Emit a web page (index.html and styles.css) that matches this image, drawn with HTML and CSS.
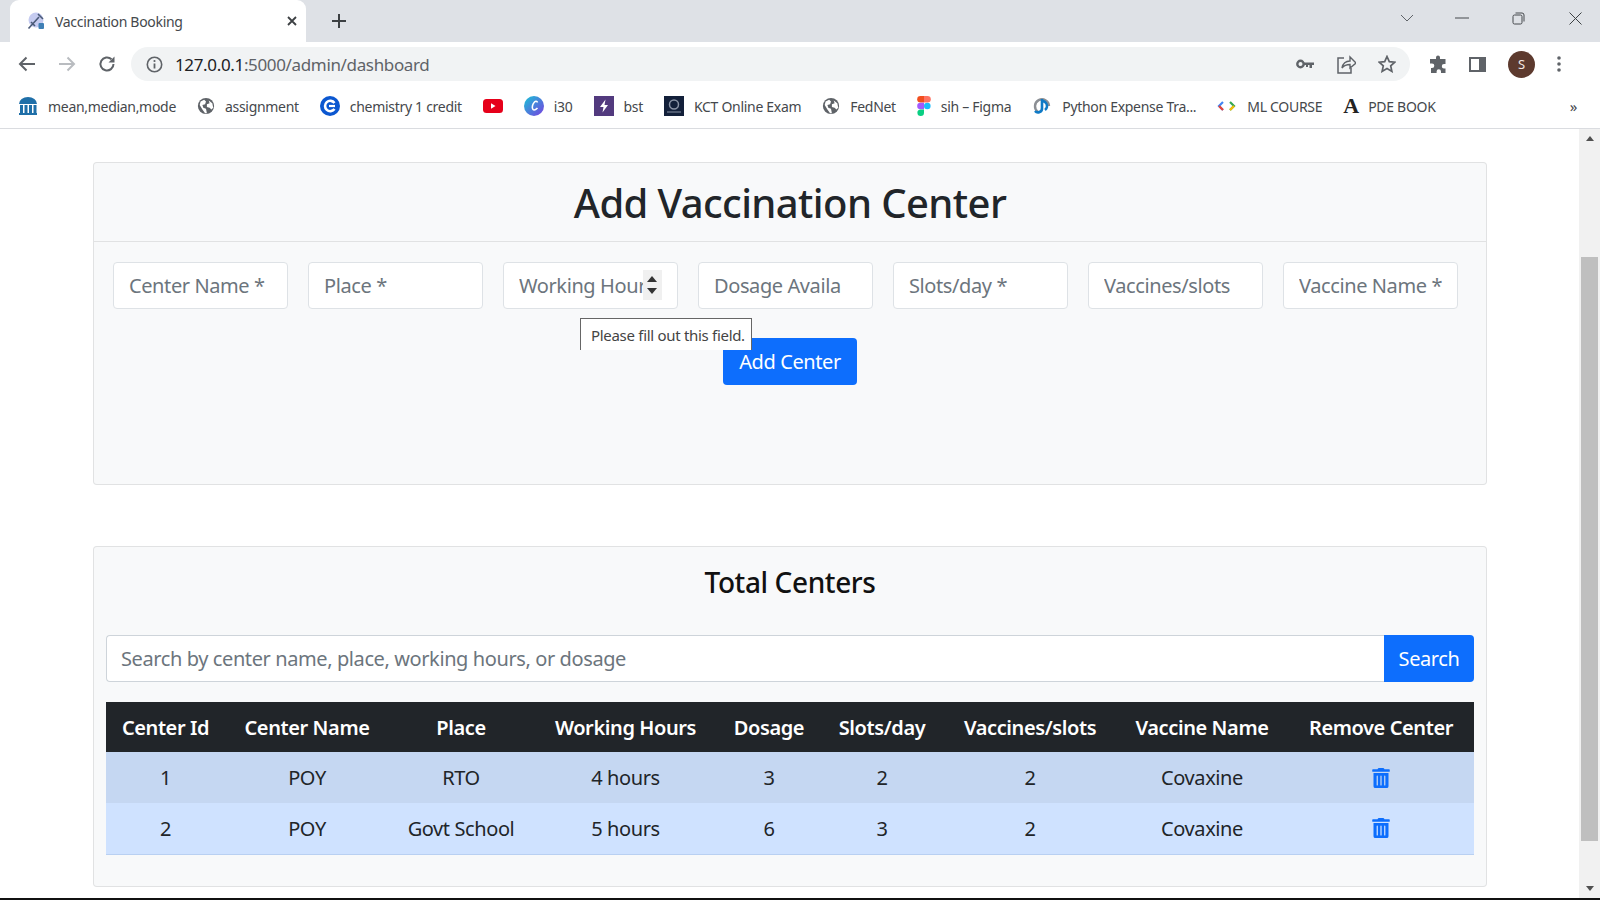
FILE: index.html
```html
<!DOCTYPE html>
<html lang="en">
<head>
  <meta charset="UTF-8" />
  <meta name="viewport" content="width=device-width, initial-scale=1.0" />
  <title>Vaccination Booking</title>
  <link rel="stylesheet" href="styles.css">
</head>
<body>
  <svg class="sprites" width="0" height="0">
    <symbol id="globe" viewBox="0 0 20 20">
      <circle cx="10" cy="10" r="9" fill="#5f6368"/>
      <path d="M4 5l4-2 2 2-1 3-3 1 1 3 3 1 1 5-2 0-3-4-3-5zM13 4l4 3 1 5-2 2-2-2-3-1 0-3 3-1z" fill="#fff"/>
    </symbol>
    <symbol id="trash" viewBox="0 0 448 512">
      <path d="M32 464a48 48 0 0 0 48 48h288a48 48 0 0 0 48-48V128H32zm272-256a16 16 0 0 1 32 0v224a16 16 0 0 1-32 0zm-96 0a16 16 0 0 1 32 0v224a16 16 0 0 1-32 0zm-96 0a16 16 0 0 1 32 0v224a16 16 0 0 1-32 0zM432 32H312l-9.4-18.7A24 24 0 0 0 281.1 0H166.8a23.72 23.72 0 0 0-21.4 13.3L136 32H16A16 16 0 0 0 0 48v32a16 16 0 0 0 16 16h416a16 16 0 0 0 16-16V48a16 16 0 0 0-16-16z" fill="currentColor"/>
    </symbol>
  </svg>

  <!-- browser chrome -->
  <header class="chrome">
    <div class="tabstrip">
      <div class="tab">
        <svg class="tab-icon" width="18" height="18" viewBox="0 0 18 18">
          <circle cx="9" cy="8" r="7.5" fill="#c5cbf0"/>
          <path d="M1.5 16.5L12 5M4 10l4 4M11 2l5 5" stroke="#4a5a78" stroke-width="1.6" fill="none"/>
          <rect x="11.5" y="11" width="5.5" height="6" rx="1" fill="#3f7fb5"/>
        </svg>
        <span class="tab-title">Vaccination Booking</span>
        <svg class="tab-close" width="10" height="10" viewBox="0 0 10 10"><path d="M1 1l8 8M9 1l-8 8" stroke="#3c4043" stroke-width="1.8"/></svg>
      </div>
      <svg class="new-tab" width="16" height="16" viewBox="0 0 16 16"><path d="M8 1v14M1 8h14" stroke="#3c4043" stroke-width="2"/></svg>
      <div class="window-btns">
        <svg class="win-chevron" width="14" height="8" viewBox="0 0 14 8"><path d="M1 1l6 6 6-6" stroke="#5f6368" stroke-width="1" fill="none"/></svg>
        <svg class="win-min" width="14" height="2" viewBox="0 0 14 2"><path d="M0 1h14" stroke="#45484c" stroke-width="1"/></svg>
        <svg class="win-max" width="13" height="13" viewBox="0 0 13 13"><rect x="1" y="3" width="9" height="9" rx="1.5" fill="none" stroke="#45484c"/><path d="M3.5 1h6.5a2 2 0 0 1 2 2v6.5" fill="none" stroke="#45484c"/></svg>
        <svg class="win-close" width="13" height="13" viewBox="0 0 13 13"><path d="M.5.5l12 12M12.5.5l-12 12" stroke="#3c4043" stroke-width="1"/></svg>
      </div>
    </div>

    <div class="toolbar">
      <svg class="nav-btn" width="18" height="16" viewBox="0 0 18 16"><path d="M17 8H2M8.5 1.5L2 8l6.5 6.5" stroke="#5f6368" stroke-width="2" fill="none"/></svg>
      <svg class="nav-btn" width="18" height="16" viewBox="0 0 18 16"><path d="M1 8h15M9.5 1.5L16 8l-6.5 6.5" stroke="#b9bcc0" stroke-width="2" fill="none"/></svg>
      <svg class="nav-btn" width="18" height="18" viewBox="0 0 18 18"><path d="M15.5 9a6.5 6.5 0 1 1-2-4.7" stroke="#5f6368" stroke-width="2" fill="none"/><path d="M16.5 1.5v6h-6z" fill="#5f6368"/></svg>
      <div class="omnibox">
        <svg width="17" height="17" viewBox="0 0 17 17"><circle cx="8.5" cy="8.5" r="7.2" fill="none" stroke="#5f6368" stroke-width="1.6"/><path d="M8.5 7.5v5" stroke="#5f6368" stroke-width="1.8"/><circle cx="8.5" cy="5" r="1.1" fill="#5f6368"/></svg>
        <span class="url"><span class="url-host">127.0.0.1</span>:5000/admin/dashboard</span>
        <span class="omni-actions">
          <svg width="18" height="10" viewBox="0 0 18 10"><circle cx="4.5" cy="5" r="3.2" fill="none" stroke="#5f6368" stroke-width="2.4"/><path d="M8 3.5h10v2.5h-2v3h-2.5V6H12v2H10V6H8z" fill="#5f6368"/></svg>
          <svg width="20" height="19" viewBox="0 0 20 19"><path d="M8 3H2v15h13v-5" fill="none" stroke="#5f6368" stroke-width="1.5"/><path d="M6 13c1-5 4-7 8-7V2l6 6-6 5V9.500c-3 0-6 1-8 3.500z" fill="none" stroke="#5f6368" stroke-width="1.4"/></svg>
          <svg width="18" height="18" viewBox="0 0 18 18"><path d="M9 1.500l2.300 5.100 5.500.6-4.100 3.700 1.200 5.500L9 13.600l-4.900 2.800 1.200-5.500L1.200 7.200l5.500-.6z" fill="none" stroke="#5f6368" stroke-width="1.7"/></svg>
        </span>
      </div>
      <div class="toolbar-end">
        <svg width="18" height="18" viewBox="0 0 18 18"><path d="M7 2.500a2 2 0 0 1 4 0V4h5.500v5h-1.500a2.200 2.200 0 0 0 0 4.400h1.500V18H12v-1.500a2.200 2.200 0 0 0-4.400 0V18H2v-5h1a2.300 2.300 0 0 0 0-4.600H1V4h6z" fill="#5f6368"/></svg>
        <svg width="17" height="15" viewBox="0 0 17 15"><rect x="1" y="1" width="15" height="13" fill="none" stroke="#5f6368" stroke-width="2"/><rect x="10" y="1" width="6" height="13" fill="#5f6368"/></svg>
        <span class="avatar">S</span>
        <svg width="4" height="16" viewBox="0 0 4 16"><circle cx="2" cy="2" r="1.800" fill="#5f6368"/><circle cx="2" cy="8" r="1.800" fill="#5f6368"/><circle cx="2" cy="14" r="1.800" fill="#5f6368"/></svg>
      </div>
    </div>

    <nav class="bookmarks">
      <a class="bookmark">
        <svg width="20" height="18" viewBox="0 0 20 18"><path d="M1 7a9 7 0 0 1 18 0z" fill="#1f6fa8"/><path d="M2 8h3v8H2zM6.500 8h3v8h-3zM11 8h3v8h-3zM15.500 8h3v8h-3zM1 16h18v2H1z" fill="#1f6fa8"/></svg>
        mean,median,mode
      </a>
      <a class="bookmark"><svg width="18" height="18"><use href="#globe"/></svg>assignment</a>
      <a class="bookmark">
        <svg width="20" height="20" viewBox="0 0 20 20"><circle cx="10" cy="10" r="10" fill="#0b57d0"/><path d="M14.500 7a5.200 5.200 0 1 0 0 6" fill="none" stroke="#fff" stroke-width="2.600"/><path d="M9 10h6" stroke="#fff" stroke-width="2.200"/></svg>
        chemistry 1 credit
      </a>
      <a class="bookmark">
        <svg width="20" height="14" viewBox="0 0 20 14"><rect width="20" height="14" rx="3.500" fill="#e6001a"/><path d="M8 4.200v5.600L12.500 7z" fill="#fff"/></svg>
      </a>
      <a class="bookmark">
        <svg width="20" height="20" viewBox="0 0 20 20"><defs><linearGradient id="canva" x1="0" y1="0" x2="1" y2="1"><stop offset="0" stop-color="#17c3d6"/><stop offset="1" stop-color="#7a3fe0"/></linearGradient></defs><circle cx="10" cy="10" r="10" fill="url(#canva)"/><path d="M13.500 6.500c-.5-1.500-2-1.500-3-.5-2 2-3 6-1.500 7.500 1 1 3 0 4.500-1.500" fill="none" stroke="#fff" stroke-width="1.600"/></svg>
        i30
      </a>
      <a class="bookmark">
        <svg width="20" height="20" viewBox="0 0 20 20"><rect width="20" height="20" fill="#523a7e"/><path d="M11.500 3.500L6 11h3.500l-1 5.500L14 9h-3.500z" fill="#fff"/></svg>
        bst
      </a>
      <a class="bookmark">
        <svg width="20" height="20" viewBox="0 0 20 20"><rect width="20" height="20" fill="#13203a"/><circle cx="10" cy="8.500" r="4.500" fill="none" stroke="#8a93a5" stroke-width="1.500"/><path d="M3 16h14" stroke="#8a93a5"/></svg>
        KCT Online Exam
      </a>
      <a class="bookmark"><svg width="18" height="18"><use href="#globe"/></svg>FedNet</a>
      <a class="bookmark">
        <svg width="14" height="20" viewBox="0 0 14 20"><path d="M7 0H3.500a3.300 3.300 0 0 0 0 6.600H7z" fill="#f24e1e"/><path d="M7 0h3.500a3.300 3.300 0 0 1 0 6.600H7z" fill="#ff7262"/><path d="M7 6.700H3.500a3.300 3.300 0 0 0 0 6.600H7z" fill="#a259ff"/><circle cx="10.300" cy="10" r="3.300" fill="#1abcfe"/><path d="M7 13.400H3.500A3.300 3.300 0 1 0 7 16.700z" fill="#0acf83"/></svg>
        sih – Figma
      </a>
      <a class="bookmark">
        <svg width="20" height="20" viewBox="0 0 20 20"><path d="M6 16a7 7 0 1 1 11-6" fill="none" stroke="#8b8f94" stroke-width="2.400"/><path d="M10 3v9a4 4 0 0 1-7 3" fill="none" stroke="#0f7ac6" stroke-width="2.600"/><path d="M10 5a5 5 0 0 1 3 9" fill="none" stroke="#0f7ac6" stroke-width="2.400"/></svg>
        Python Expense Tra...
      </a>
      <a class="bookmark">
        <svg width="20" height="10" viewBox="0 0 20 10"><path d="M6 1L2 5l4 4" fill="none" stroke="#4285f4" stroke-width="2.200"/><path d="M6 9L2 5" fill="none" stroke="#ea4335" stroke-width="2.200"/><path d="M13 1l4 4-4 4" fill="none" stroke="#34a853" stroke-width="2.200"/><path d="M13 9l4-4" fill="none" stroke="#fbbc04" stroke-width="2.200"/></svg>
        ML COURSE
      </a>
      <a class="bookmark"><span class="pde-icon">A</span>PDE BOOK</a>
      <span class="more">»</span>
    </nav>
  </header>

  <!-- page viewport -->
  <div class="viewport">
    <main class="page">
      <section class="card add-card">
        <h1 class="card-header">Add Vaccination Center</h1>
        <form class="card-body">
          <div class="field-row">
            <input class="field" placeholder="Center Name *" />
            <input class="field" placeholder="Place *" />
            <div class="field-wrap">
              <input class="field" placeholder="Working Hour" />
              <span class="spin"></span>
            </div>
            <input class="field" placeholder="Dosage Availa" />
            <input class="field" placeholder="Slots/day *" />
            <input class="field" placeholder="Vaccines/slots" />
            <input class="field" placeholder="Vaccine Name *" />
          </div>
          <div class="submit-row">
            <button class="btn" type="button">Add Center</button>
          </div>
          <div class="tooltip">Please fill out this field.</div>
        </form>
      </section>

      <section class="card list-card">
        <h2 class="list-title">Total Centers</h2>
        <div class="search">
          <input class="search-input" placeholder="Search by center name, place, working hours, or dosage" />
          <button class="btn search-btn" type="button">Search</button>
        </div>
        <table class="centers">
          <thead>
            <tr>
              <th>Center Id</th><th>Center Name</th><th>Place</th><th>Working Hours</th><th>Dosage</th>
              <th>Slots/day</th><th>Vaccines/slots</th><th>Vaccine Name</th><th>Remove Center</th>
            </tr>
          </thead>
          <tbody>
            <tr>
              <td>1</td><td>POY</td><td>RTO</td><td>4 hours</td><td>3</td><td>2</td><td>2</td><td>Covaxine</td>
              <td><svg class="trash" width="18" height="20"><use href="#trash"/></svg></td>
            </tr>
            <tr>
              <td>2</td><td>POY</td><td>Govt School</td><td>5 hours</td><td>6</td><td>3</td><td>2</td><td>Covaxine</td>
              <td><svg class="trash" width="18" height="20"><use href="#trash"/></svg></td>
            </tr>
          </tbody>
        </table>
      </section>
    </main>

    <div class="scrollbar">
      <span class="arrow-up"></span>
      <div class="scroll-track"><div class="scroll-thumb"></div></div>
      <span class="arrow-down"></span>
    </div>
  </div>
  <div class="taskbar-edge"></div>
</body>
</html>
```

FILE: styles.css
```css
* {
  box-sizing: border-box;
}

html, body {
  height: 100%;
}

body {
  margin: 0;
  height: 900px;
  overflow: hidden;
  display: flex;
  flex-direction: column;
  font-family: "Noto Sans", "Open Sans", sans-serif;
  background-color: #fff;
  color: #212529;
}

.sprites {
  position: absolute;
}

/* browser chrome */
.chrome {
  flex: none;
  height: 129px;
  border-bottom: 1px solid #dadce0;
  background-color: #fff;
}

.tabstrip {
  height: 42px;
  display: flex;
  align-items: center;
  background-color: #dee1e6;
  padding-left: 10px;
}

.tab {
  width: 296px;
  height: 42px;
  display: flex;
  align-items: center;
  background-color: #fff;
  border-radius: 9px 9px 0 0;
  padding: 0 9px 0 17px;
}

.tab-title {
  flex: 1;
  margin-left: 10px;
  font-size: 14px;
  letter-spacing: -0.3px;
  color: #45484c;
}

.new-tab {
  margin-left: 25px;
}

.window-btns {
  margin-left: auto;
  display: flex;
  align-items: center;
  height: 42px;
}

.win-chevron {
  margin-right: 41px;
  margin-top: -6px;
}

.win-min {
  margin-right: 43px;
  margin-top: -6px;
}

.win-max {
  margin-right: 44px;
  margin-top: -6px;
}

.win-close {
  margin-right: 18px;
  margin-top: -6px;
}

.toolbar {
  height: 42px;
  display: flex;
  align-items: center;
  padding: 2px 0 0 18px;
}

.nav-btn {
  margin-right: 22px;
}

.omnibox {
  width: 1279px;
  height: 34px;
  margin-left: -7px;
  display: flex;
  align-items: center;
  background-color: #f1f3f4;
  border-radius: 17px;
  padding: 0 14px 0 15px;
}

.url {
  margin-left: 12px;
  font-size: 17px;
  letter-spacing: -0.35px;
  color: #5f6368;
}

.url-host {
  color: #202124;
}

.omni-actions {
  margin-left: auto;
  display: flex;
  align-items: center;
  gap: 22px;
}

.toolbar-end {
  display: flex;
  align-items: center;
  margin-left: 19px;
  gap: 22px;
}

.avatar {
  width: 27px;
  height: 27px;
  border-radius: 50%;
  background-color: #5d3a2e;
  color: #f3e9e4;
  font-size: 13px;
  display: flex;
  align-items: center;
  justify-content: center;
}

.bookmarks {
  height: 44px;
  display: flex;
  align-items: center;
  gap: 21px;
  padding-left: 18px;
  font-size: 14px;
  letter-spacing: -0.3px;
  color: #45484c;
}

.bookmark {
  display: flex;
  align-items: center;
  gap: 10px;
  white-space: nowrap;
}

.pde-icon {
  width: 15px;
  font-family: "Liberation Serif", serif;
  font-size: 22px;
  font-weight: bold;
  color: #222;
}

.more {
  margin-left: auto;
  margin-right: 23px;
  font-size: 15px;
}

/* page */
.viewport {
  flex: 1;
  min-height: 0;
  display: flex;
}

.page {
  flex: 1;
  padding: 33px 92px 0 93px;
  overflow: hidden;
}

.card {
  background-color: #f8f9fa;
  border: 1px solid rgba(0, 0, 0, 0.09);
  border-radius: 4px;
}

.add-card {
  height: 323px;
  margin-bottom: 61px;
}

.card-header {
  height: 79px;
  margin: 0;
  border-bottom: 1px solid rgba(0, 0, 0, 0.09);
  display: flex;
  align-items: center;
  justify-content: center;
  font-size: 40px;
  font-weight: 500;
  letter-spacing: -0.6px;
  color: #212529;
}

.card-body {
  position: relative;
  padding: 20px 19px;
}

.field-row {
  display: grid;
  grid-template-columns: repeat(7, 175px);
  column-gap: 20px;
}

.field-wrap {
  position: relative;
}

.field {
  width: 100%;
  height: 47px;
  padding: 0 15px;
  border: 1px solid #dee2e6;
  border-radius: 4px;
  background-color: #fff;
  font-family: inherit;
  font-size: 20px;
  letter-spacing: -0.4px;
}

.field::placeholder,
.search-input::placeholder {
  color: #6c757d;
  opacity: 1;
}

/* number spinner drawn over the third field */
.spin {
  position: absolute;
  top: 8px;
  right: 16px;
  width: 19px;
  height: 30px;
  background-color: #f0f0f0;
}

.spin::before,
.spin::after {
  content: "";
  position: absolute;
  left: 4px;
  border-left: 5.5px solid transparent;
  border-right: 5.5px solid transparent;
}

.spin::before {
  top: 6px;
  border-bottom: 6px solid #333;
}

.spin::after {
  bottom: 6px;
  border-top: 6px solid #333;
}

.submit-row {
  display: flex;
  justify-content: center;
  margin-top: 29px;
}

.btn {
  height: 47px;
  padding: 0 16px;
  border: none;
  border-radius: 4px;
  background-color: #0d6efd;
  color: #fff;
  font-family: inherit;
  font-size: 20px;
  letter-spacing: -0.4px;
}

.tooltip {
  position: absolute;
  top: 76px;
  left: 486px;
  width: 172px;
  height: 32px;
  padding-left: 10px;
  display: flex;
  align-items: center;
  background-color: #fff;
  border: 1px solid #666;
  border-bottom: none;
  font-size: 15px;
  letter-spacing: -0.3px;
  color: #444;
}

.list-card {
  height: 341px;
  padding: 0 12px;
}

.list-title {
  height: 88px;
  margin: 0;
  display: flex;
  align-items: center;
  justify-content: center;
  padding-bottom: 26px;
  padding-top: 8px;
  font-size: 28px;
  font-weight: 500;
  letter-spacing: -0.4px;
  color: #111;
}

.search {
  display: flex;
  margin-bottom: 20px;
}

.search-input {
  flex: 1;
  height: 47px;
  padding: 0 14px;
  border: 1px solid #ced4da;
  border-right: none;
  border-radius: 4px 0 0 4px;
  background-color: #fff;
  font-family: inherit;
  font-size: 20px;
  letter-spacing: -0.4px;
}

.search-btn {
  width: 90px;
  padding: 0;
  border-radius: 0 4px 4px 0;
}

.centers {
  width: 100%;
  table-layout: fixed;
  border-collapse: collapse;
  font-size: 20px;
  letter-spacing: -0.4px;
}

.centers th,
.centers td {
  padding: 0;
  text-align: center;
  vertical-align: middle;
}

.centers th {
  height: 50px;
  background-color: #212529;
  color: #fff;
  font-weight: 600;
}

.centers td {
  height: 51px;
}

.centers tbody tr:nth-child(odd) td {
  background-color: #c5d7f2;
}

.centers tbody tr:nth-child(even) td {
  background-color: #cfe2ff;
  border-bottom: 1px solid #b9d0f2;
}

.centers th:nth-child(1) { width: 119px; }
.centers th:nth-child(2) { width: 164px; }
.centers th:nth-child(3) { width: 144px; }
.centers th:nth-child(4) { width: 185px; }
.centers th:nth-child(5) { width: 102px; }
.centers th:nth-child(6) { width: 124px; }
.centers th:nth-child(7) { width: 172px; }
.centers th:nth-child(8) { width: 172px; }

.trash {
  display: block;
  margin: 0 auto;
  color: #0d6efd;
}

/* scrollbar */
.scrollbar {
  flex: none;
  width: 21px;
  display: flex;
  flex-direction: column;
  align-items: center;
  background-color: #f1f1f1;
}

.scroll-track {
  flex: 1;
  width: 100%;
  padding: 109px 2px 38px 2px;
}

.scroll-thumb {
  height: 100%;
  background-color: #bfbfbf;
}

.arrow-up,
.arrow-down {
  flex: none;
  width: 0;
  height: 0;
  margin: 7px 0;
  border-left: 4.5px solid transparent;
  border-right: 4.5px solid transparent;
}

.arrow-up {
  border-bottom: 5px solid #505050;
}

.arrow-down {
  border-top: 5px solid #505050;
}

.taskbar-edge {
  flex: none;
  height: 2px;
  background-color: #111;
}
```
